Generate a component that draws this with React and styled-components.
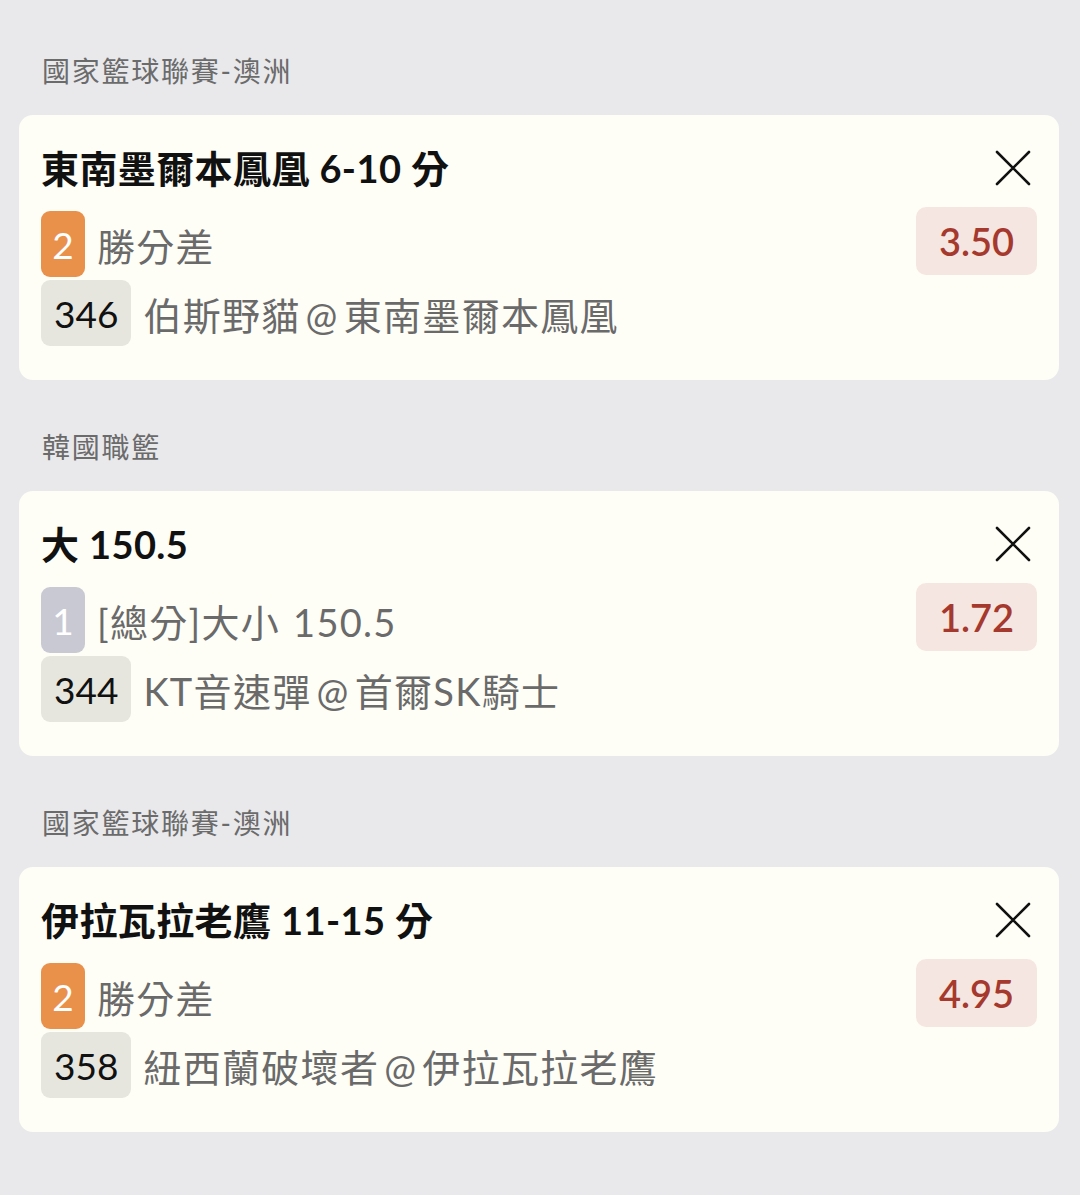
import React from 'react'
import styled, { createGlobalStyle } from 'styled-components';

const Global = createGlobalStyle`
body{
  margin:0;
  background:#e9e9ec;
  font-family: Lato, "Noto Sans CJK TC", sans-serif;
}
`;

const Page = styled.div`
display:flex;
flex-direction:column;
gap:49px;
padding:53px 21px 62px 19px;
min-height:1195px;
box-sizing:border-box;
background:#e9e9ec;
`;

const Section = styled.div`
display:flex;
flex-direction:column;
gap:26px;
`;

const League = styled.div`
font-size:28px;
line-height:36px;
letter-spacing:1.75px;
color:#6b6b6b;
padding-left:23px;
`;

const Card = styled.div`
background:#fefef7;
border-radius:14px;
padding:28px 22px 34px 22px;
display:flex;
flex-direction:column;
`;

const TitleRow = styled.div`
display:flex;
align-items:center;
justify-content:space-between;
height:50px;
margin-bottom:18px;
`;

const Title = styled.div`
font-size:38px;
font-weight:700;
color:#111;
letter-spacing:0.4px;
margin-top:-4px;
`;

const Close = styled.button`
border:none;
background:none;
padding:0;
margin-right:6px;
width:36px;
height:36px;
display:flex;
cursor:pointer;
`;

const Row = styled.div`
display:flex;
align-items:center;
justify-content:space-between;
height:66px;
& + & { margin-top:3px; }
`;

const Left = styled.div`
display:flex;
align-items:center;
gap:12px;
`;

const Badge = styled.div`
height:66px;
min-width:44px;
box-sizing:border-box;
padding:0 ${({ $wide }) => ($wide ? '13px' : '0')};
border-radius:9px;
display:flex;
align-items:center;
justify-content:center;
font-size:37px;
background:${({ $tone }) =>
  $tone === 'orange' ? '#e9914b' : $tone === 'lilac' ? '#c9c9d3' : '#e6e6df'};
color:${({ $tone }) => ($tone === 'plain' ? '#111' : '#fff')};
`;

const Info = styled.div`
font-size:38px;
letter-spacing:1.3px;
word-spacing:${({ $tight }) => ($tight ? '-6px' : '2px')};
color:#6a6a6a;
`;

const Odds = styled.div`
width:121px;
height:68px;
margin-top:-6px;
border-radius:10px;
background:#f5e6e1;
color:#a5392e;
font-size:38px;
font-weight:600;
display:flex;
align-items:center;
justify-content:center;
`;

const bets = [
  {
    league: '國家籃球聯賽-澳洲',
    title: '東南墨爾本鳳凰 6-10 分',
    count: '2',
    tone: 'orange',
    market: '勝分差',
    odds: '3.50',
    code: '346',
    match: '伯斯野貓 @ 東南墨爾本鳳凰',
  },
  {
    league: '韓國職籃',
    title: '大 150.5',
    count: '1',
    tone: 'lilac',
    market: '[總分]大小 150.5',
    odds: '1.72',
    code: '344',
    match: 'KT音速彈 @ 首爾SK騎士',
  },
  {
    league: '國家籃球聯賽-澳洲',
    title: '伊拉瓦拉老鷹 11-15 分',
    count: '2',
    tone: 'orange',
    market: '勝分差',
    odds: '4.95',
    code: '358',
    match: '紐西蘭破壞者 @ 伊拉瓦拉老鷹',
  },
];

const CloseIcon = () => (
  <svg width="36" height="36" viewBox="0 0 36 36">
    <path d="M2 2 L34 34 M34 2 L2 34" stroke="#111" strokeWidth="2.6" strokeLinecap="round" fill="none" />
  </svg>
);

const App = () => {
  return <>
    <Global />
    <Page>
      {bets.map((b, i) => (
        <Section key={i}>
          <League>{b.league}</League>
          <Card>
            <TitleRow>
              <Title>{b.title}</Title>
              <Close aria-label="remove"><CloseIcon /></Close>
            </TitleRow>
            <Row>
              <Left>
                <Badge $tone={b.tone}>{b.count}</Badge>
                <Info>{b.market}</Info>
              </Left>
              <Odds>{b.odds}</Odds>
            </Row>
            <Row>
              <Left>
                <Badge $tone="plain" $wide>{b.code}</Badge>
                <Info $tight>{b.match}</Info>
              </Left>
            </Row>
          </Card>
        </Section>
      ))}
    </Page>
  </>
}

export default App
